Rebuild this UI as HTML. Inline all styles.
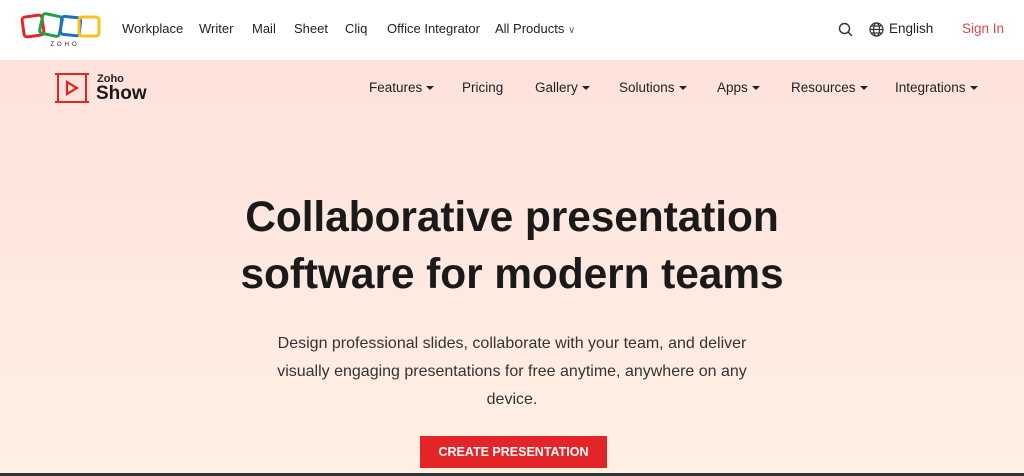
<!DOCTYPE html>
<html><head><meta charset="utf-8"><style>
*{margin:0;padding:0;box-sizing:border-box}
body{width:1024px;height:476px;overflow:hidden;font-family:"Liberation Sans",sans-serif;background:#fff;position:relative;color:#222}
.top{height:60px;background:#fff;position:relative}
.top a{position:absolute;top:21px;font-size:13px;color:#222;text-decoration:none}
.hero{position:absolute;top:60px;left:0;width:1024px;height:413px;background:linear-gradient(#fde2dc,#fff0e3)}
.nav{position:absolute;top:80px;font-size:13.5px;color:#222}
.car{display:inline-block;border-left:4px solid transparent;border-right:4px solid transparent;border-top:4px solid #222;vertical-align:middle;margin-left:4px}
h1{position:absolute;top:189px;left:0;width:1024px;text-align:center;font-size:42.5px;line-height:57px;font-weight:bold;color:#1a1a1a;letter-spacing:-0.1px}
p{position:absolute;top:330px;left:270px;width:484px;text-align:center;font-size:16px;line-height:28px;color:#333}
.btn{position:absolute;top:436px;left:420px;width:187px;height:32px;background:#e42527;color:#fff;font-weight:bold;font-size:12.5px;text-align:center;line-height:32px}
.bar{position:absolute;top:473px;left:0;width:1024px;height:3px;background:#333}
</style></head><body>
<div class="top">
<svg style="position:absolute;left:20px;top:12px" width="82" height="36" viewBox="0 0 82 36">
<rect x="3" y="4" width="20" height="20" rx="3" fill="none" stroke="#e42527" stroke-width="3" transform="rotate(-8 13 14)"/>
<rect x="21" y="3" width="20" height="20" rx="3" fill="none" stroke="#23a047" stroke-width="3" transform="rotate(12 31 13)"/>
<rect x="41" y="5" width="19" height="18" rx="3" fill="none" stroke="#1e6fc3" stroke-width="3" transform="rotate(6 50 14)"/>
<rect x="59" y="5" width="20" height="19" rx="3" fill="none" stroke="#f7c21b" stroke-width="3"/>
<text x="45" y="34" font-size="6" text-anchor="middle" letter-spacing="3" fill="#222" font-family="Liberation Sans">ZOHO</text>
</svg>
<a style="left:122px">Workplace</a><a style="left:199px">Writer</a><a style="left:252px">Mail</a><a style="left:294px">Sheet</a><a style="left:345px">Cliq</a><a style="left:387px">Office Integrator</a><a style="left:495px">All Products <span style="font-size:10px;color:#666">&#8744;</span></a>
<svg style="position:absolute;left:838px;top:22px" width="15" height="15" viewBox="0 0 15 15"><circle cx="6.5" cy="6.5" r="5" fill="none" stroke="#333" stroke-width="1.4"/><path d="M10 10l4 4" stroke="#333" stroke-width="1.4"/></svg>
<svg style="position:absolute;left:869px;top:22px" width="15" height="15" viewBox="0 0 15 15" fill="none" stroke="#333" stroke-width="1.2"><circle cx="7.5" cy="7.5" r="6.5"/><ellipse cx="7.5" cy="7.5" rx="3" ry="6.5"/><path d="M1 7.5h13M2 4h11M2 11h11"/></svg>
<a style="left:889px;font-size:13.5px">English</a>
<a style="left:962px;color:#e0474a;font-size:13.5px">Sign In</a>
</div>
<div class="hero"></div>
<svg style="position:absolute;left:54px;top:72px" width="38" height="32" viewBox="0 0 38 32" fill="none" stroke="#e42527" stroke-width="2"><path d="M1 2h34M1 30h34M4 2v28M32 2v28"/><path d="M13 10l10 6-10 6z" stroke-width="2.2"/></svg>
<div style="position:absolute;left:97px;top:73px;font-size:11px;font-weight:bold;color:#222">Zoho</div>
<div style="position:absolute;left:96px;top:83px;font-size:19px;font-weight:bold;color:#1a1a1a">Show</div>
<div class="nav" style="left:369px">Features<span class="car"></span></div>
<div class="nav" style="left:462px">Pricing</div>
<div class="nav" style="left:535px">Gallery<span class="car"></span></div>
<div class="nav" style="left:619px">Solutions<span class="car"></span></div>
<div class="nav" style="left:717px">Apps<span class="car"></span></div>
<div class="nav" style="left:791px">Resources<span class="car"></span></div>
<div class="nav" style="left:895px">Integrations<span class="car"></span></div>
<h1>Collaborative presentation<br>software for modern teams</h1>
<p>Design professional slides, collaborate with your team, and deliver visually engaging presentations for free anytime, anywhere on any device.</p>
<div class="btn">CREATE PRESENTATION</div>
<div class="bar"></div>
</body></html>
